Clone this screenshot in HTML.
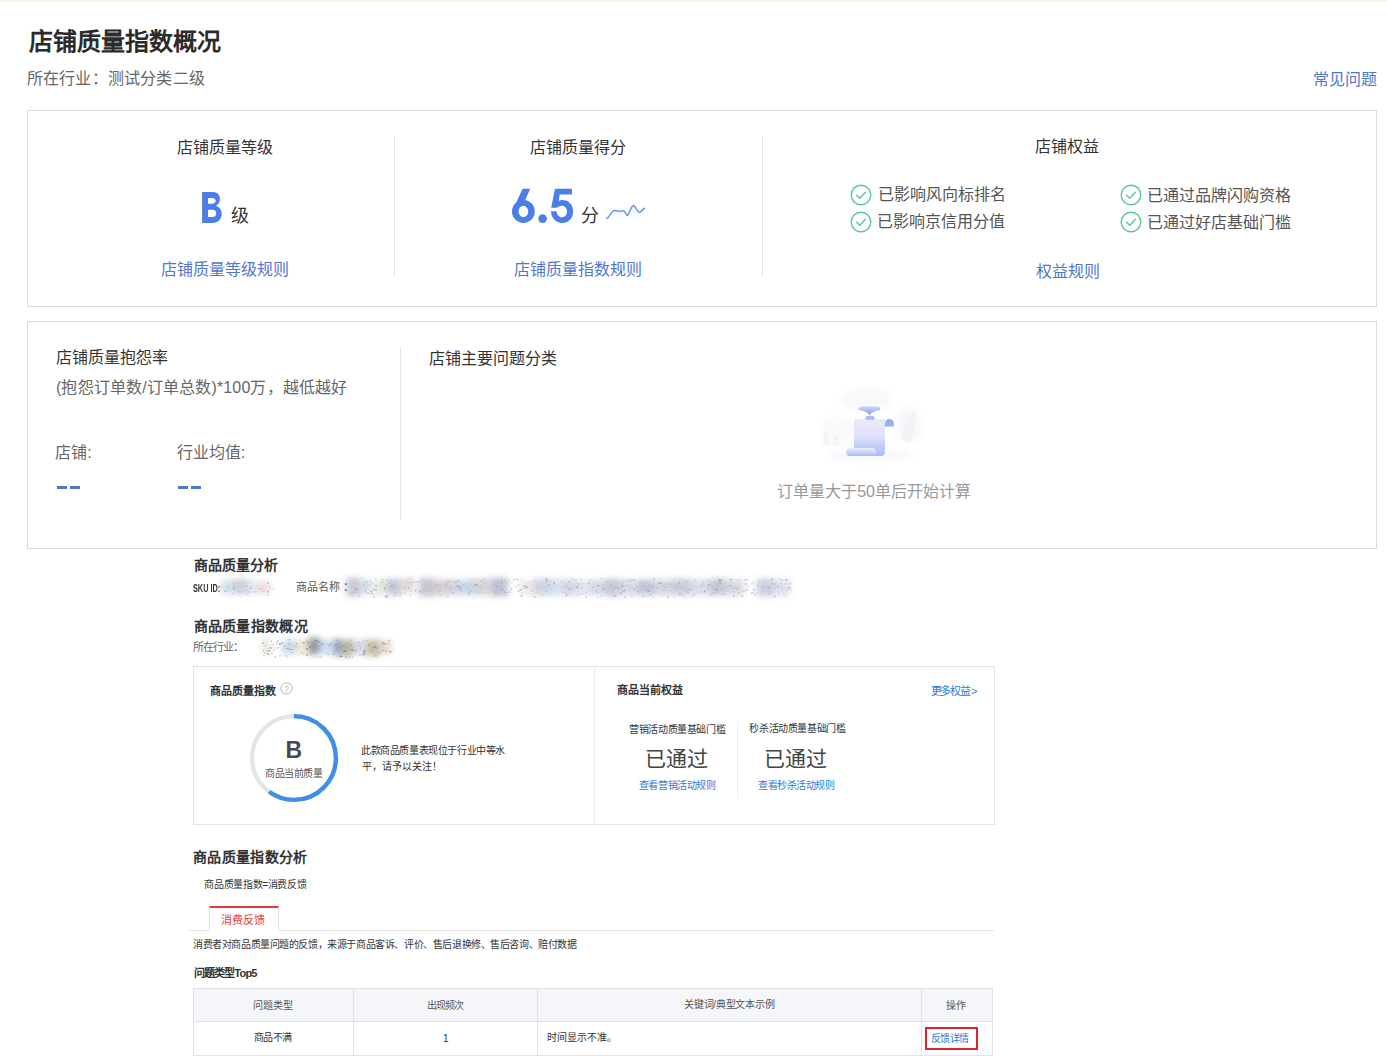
<!DOCTYPE html>
<html lang="zh-CN"><head><meta charset="utf-8">
<style>
html,body{margin:0;padding:0;background:#fff;}
body{width:1387px;height:1063px;position:relative;overflow:hidden;font-family:"Liberation Sans",sans-serif;}
.t{position:absolute;white-space:nowrap;}
.a{position:absolute;}
.topbar{position:absolute;left:0;top:0;width:1387px;height:2px;background:#fdf4e8;}
.box{position:absolute;border:1px solid #dcdcdc;box-sizing:border-box;}
.vl{position:absolute;width:1px;background:#e3e3e3;}
.blur{position:absolute;filter:blur(3px);}
</style></head><body>
<div class="topbar"></div>
<div class="box" style="left:27px;top:110px;width:1350px;height:197px;"></div>
<div class="vl" style="left:394px;top:137px;height:140px;"></div>
<div class="vl" style="left:762px;top:137px;height:140px;"></div>
<div class="box" style="left:27px;top:321px;width:1350px;height:228px;"></div>
<div class="vl" style="left:400px;top:347px;height:173px;background:#e6e6e6"></div>
<!-- dashes -->
<div class="a" style="left:57px;top:486px;width:10px;height:3px;background:#4f77cf"></div>
<div class="a" style="left:70px;top:486px;width:10px;height:3px;background:#4f77cf"></div>
<div class="a" style="left:178px;top:486px;width:10px;height:3px;background:#4f77cf"></div>
<div class="a" style="left:191px;top:486px;width:10px;height:3px;background:#4f77cf"></div>
<!-- check icons -->
<svg class="a" style="left:850px;top:184px" width="22" height="22" viewBox="0 0 22 22"><circle cx="11" cy="11" r="9.8" fill="none" stroke="#5cc6a2" stroke-width="1.4"/><path d="M6.6 11.2 L9.8 14.2 L15.4 8.2" fill="none" stroke="#5cc6a2" stroke-width="1.4" stroke-linecap="round" stroke-linejoin="round"/></svg>
<svg class="a" style="left:850px;top:211px" width="22" height="22" viewBox="0 0 22 22"><circle cx="11" cy="11" r="9.8" fill="none" stroke="#5cc6a2" stroke-width="1.4"/><path d="M6.6 11.2 L9.8 14.2 L15.4 8.2" fill="none" stroke="#5cc6a2" stroke-width="1.4" stroke-linecap="round" stroke-linejoin="round"/></svg>
<svg class="a" style="left:1120px;top:184px" width="22" height="22" viewBox="0 0 22 22"><circle cx="11" cy="11" r="9.8" fill="none" stroke="#5cc6a2" stroke-width="1.4"/><path d="M6.6 11.2 L9.8 14.2 L15.4 8.2" fill="none" stroke="#5cc6a2" stroke-width="1.4" stroke-linecap="round" stroke-linejoin="round"/></svg>
<svg class="a" style="left:1120px;top:211px" width="22" height="22" viewBox="0 0 22 22"><circle cx="11" cy="11" r="9.8" fill="none" stroke="#5cc6a2" stroke-width="1.4"/><path d="M6.6 11.2 L9.8 14.2 L15.4 8.2" fill="none" stroke="#5cc6a2" stroke-width="1.4" stroke-linecap="round" stroke-linejoin="round"/></svg>
<!-- sparkline -->
<svg class="a" style="left:604px;top:202px" width="44" height="22" viewBox="0 0 44 22">
<defs><linearGradient id="sg" x1="0" y1="0" x2="0" y2="1"><stop offset="0" stop-color="#dfe7fa" stop-opacity="1"/><stop offset="1" stop-color="#fff" stop-opacity="0"/></linearGradient></defs>
<path d="M2.8 16.4 C5.5 15.5 7.5 8.6 10.1 8.4 C12.5 8.2 14 9.5 16 9.2 C18 8.9 19.5 7.6 21 10 C22 12 22.8 14 23.6 13.2 C25 11.5 27.5 3.5 29.5 3.6 C31.5 3.7 33.5 10.5 35.3 10.4 C37 10.3 39 7 40.5 6.3 L40.5 21 L2.8 21 Z" fill="url(#sg)"/>
<path d="M2.8 16.4 C5.5 15.5 7.5 8.6 10.1 8.4 C12.5 8.2 14 9.5 16 9.2 C18 8.9 19.5 7.6 21 10 C22 12 22.8 14 23.6 13.2 C25 11.5 27.5 3.5 29.5 3.6 C31.5 3.7 33.5 10.5 35.3 10.4 C37 10.3 39 7 40.5 6.3" fill="none" stroke="#6f98e2" stroke-width="1.5" stroke-linecap="round"/>
</svg>

<!-- big B and 6.5 -->
<svg class="a" style="left:195px;top:185px" width="460" height="45" viewBox="195 185 460 45">
<path fill-rule="evenodd" fill="#4d7ee8" transform="translate(202.1 192)" d="M0 0 H10.2 C15 0 17.8 2.6 17.8 7 C17.8 10 16.4 12.4 14 13.8 C17.6 15 19.6 17.8 19.6 21.8 C19.6 27.4 16 31 10.4 31 H0 Z M5.9 5.9 H9.8 C12.2 5.9 13.5 7 13.5 8.85 C13.5 10.7 12.2 11.8 9.8 11.8 H5.9 Z M5.9 17.8 H10.4 C12.9 17.8 14.1 19.2 14.1 21.4 C14.1 23.6 12.9 25 10.4 25 H5.9 Z"/>
<path fill="#4d7ee8" d="M522.6 188.8 L530.2 188.8 L524.6 201.6 L513.4 208.4 Z"/><path fill="#4d7ee8" fill-rule="evenodd" d="M534.8 211.4 A11.4 11.5 0 1 1 512 211.4 A11.4 11.5 0 1 1 534.8 211.4 Z M528.2 211.5 A4.8 5.8 0 1 0 518.6 211.5 A4.8 5.8 0 1 0 528.2 211.5 Z"/>
<path fill="#4d7ee8" d="M555 188.8 L571.9 188.8 L571.9 194.6 L559.6 194.6 L558.8 201.2 C559.8 200.3 560.8 199.9 562.2 199.9 C568.6 199.9 573.1 204.6 573.1 211.4 C573.1 218.3 568.4 222.9 562 222.9 C556 222.9 551 218 551 211.3 L556.7 211.3 C556.7 214.8 559 217.3 561.9 217.3 C565 217.3 567 214.8 567 211.5 C567 208.2 565 205.7 561.9 205.7 C559.5 205.7 557.8 206.8 557.2 207.7 L551.2 207.7 Z"/>
<circle cx="542.6" cy="218.6" r="4.3" fill="#4d7ee8"/>
</svg>
<!-- empty illustration -->
<svg class="a" style="left:800px;top:375px" width="140" height="95" viewBox="800 375 140 95">
<defs>
<linearGradient id="pg" x1="0" y1="0" x2="0" y2="1"><stop offset="0" stop-color="#ecebfb"/><stop offset="0.45" stop-color="#dfe2fa"/><stop offset="1" stop-color="#a9bcf2"/></linearGradient>
<linearGradient id="rg" x1="0" y1="0" x2="0" y2="1"><stop offset="0" stop-color="#eceefb"/><stop offset="1" stop-color="#a8bcf2"/></linearGradient>
<linearGradient id="hg" x1="0" y1="0" x2="0" y2="1"><stop offset="0" stop-color="#c9d4f6"/><stop offset="1" stop-color="#8ea6ea"/></linearGradient>
<filter id="fb" x="-50%" y="-50%" width="200%" height="200%"><feGaussianBlur stdDeviation="3"/></filter>
<filter id="fb1" x="-20%" y="-20%" width="140%" height="140%"><feGaussianBlur stdDeviation="0.5"/></filter>
</defs>
<g filter="url(#fb)" opacity="0.5">
<ellipse cx="866" cy="400" rx="26" ry="12" fill="#f1f2f7"/>
<ellipse cx="838" cy="430" rx="18" ry="14" fill="#f3f4f8"/>
<ellipse cx="908" cy="425" rx="14" ry="18" fill="#f0f1f6"/>
<ellipse cx="870" cy="455" rx="44" ry="6" fill="#eef0f8"/>
</g>
<g opacity="0.35"><path d="M822 446 L824 432 L828 432 L830 446 Z M832 446 L834 436 L838 436 L839 446 Z" fill="#e8e9ef" filter="url(#fb1)"/>
<path d="M902 440 C904 425 908 415 915 410 C916 422 914 434 909 444 Z" fill="#e9eaf1" filter="url(#fb1)"/></g>
<g filter="url(#fb1)">
<path d="M854 419 L885 419 L885 452 Q885 456 881 456 L854 456 Z" fill="url(#pg)"/>
<rect x="846" y="448" width="30" height="8" rx="4" fill="url(#rg)"/>
<path d="M885 426.5 L885 423.3 A4.4 4.4 0 0 1 893.8 423.3 L893.8 426.5 Z" fill="#98b0f0"/>
<path d="M858.5 409.5 Q858 406.5 862 406.5 L877 406.5 Q881 406.5 880 410 L878 410.5 Q873 411 869.5 415 Q866 411 861 410.5 Z" fill="url(#hg)"/>
<path d="M865.3 419.8 L865.3 418 Q865.3 415.8 869.9 415.8 Q874.6 415.8 874.6 418 L874.6 419.8 Z" fill="#a9bdf2"/>
</g>
</svg>

<!-- bottom composite -->
<svg class="a" style="left:180px;top:560px" width="640" height="110" viewBox="180 560 640 110">
<defs><filter id="bl" x="-20%" y="-50%" width="140%" height="200%"><feGaussianBlur stdDeviation="3"/></filter></defs>
<g filter="url(#bl)" opacity="0.75">
<rect x="221" y="580" width="12" height="14" fill="#c5d6ea"/>
<rect x="233" y="579" width="14" height="15" fill="#bcbfcc"/>
<rect x="247" y="580" width="12" height="14" fill="#d4e4f0"/>
<rect x="258" y="581" width="12" height="13" fill="#ecd2d6"/>
<rect x="346" y="578" width="14" height="18" fill="#b9b6c2"/>
<rect x="360" y="579" width="12" height="16" fill="#c6dbe6"/>
<rect x="375" y="580" width="12" height="15" fill="#d8e4cc"/>
<rect x="387" y="579" width="14" height="16" fill="#aab6cc"/>
<rect x="402" y="578" width="12" height="14" fill="#dcc8cc"/>
<rect x="419" y="578" width="16" height="18" fill="#b4b4c4"/>
<rect x="435" y="580" width="18" height="15" fill="#c8bcc8"/>
<rect x="453" y="580" width="20" height="15" fill="#b4c8dc"/>
<rect x="473" y="579" width="16" height="16" fill="#c4c4cc"/>
<rect x="490" y="578" width="18" height="18" fill="#a8b0c4"/>
<rect x="520" y="581" width="14" height="13" fill="#e4dce0"/>
<rect x="534" y="579" width="16" height="16" fill="#bcc4d8"/>
<rect x="550" y="579" width="14" height="16" fill="#c8d8ec"/>
<rect x="564" y="580" width="12" height="15" fill="#c0c8d4"/>
<rect x="576" y="580" width="14" height="15" fill="#d8dcec"/>
<rect x="590" y="580" width="14" height="15" fill="#c4d0e4"/>
<rect x="604" y="579" width="16" height="17" fill="#b4b8c8"/>
<rect x="620" y="580" width="18" height="15" fill="#c4ccdc"/>
<rect x="638" y="580" width="16" height="15" fill="#a8b4cc"/>
<rect x="654" y="580" width="18" height="15" fill="#c4c8d4"/>
<rect x="672" y="579" width="18" height="16" fill="#b4bccc"/>
<rect x="690" y="580" width="20" height="15" fill="#ccd0dc"/>
<rect x="710" y="579" width="16" height="16" fill="#aeb6ca"/>
<rect x="726" y="580" width="18" height="15" fill="#c8ccd8"/>
<rect x="757" y="579" width="18" height="17" fill="#b8c0d4"/>
<rect x="776" y="580" width="14" height="15" fill="#d0d4e0"/>
<rect x="262" y="639" width="8" height="16" fill="#dcdcd8"/>
<rect x="282" y="640" width="14" height="14" fill="#b4cce6"/>
<rect x="296" y="640" width="12" height="14" fill="#e6e2c4"/>
<rect x="308" y="638" width="12" height="16" fill="#6e7278"/>
<rect x="320" y="640" width="12" height="14" fill="#b8d2ec"/>
<rect x="333" y="639" width="8" height="16" fill="#7080ac"/>
<rect x="341" y="640" width="12" height="16" fill="#98a07c"/>
<rect x="353" y="640" width="12" height="14" fill="#c8cce0"/>
<rect x="366" y="640" width="14" height="16" fill="#b0a080"/>
<rect x="380" y="640" width="12" height="14" fill="#e8d4c8"/>
</g>
<g><rect x="238" y="582" width="1" height="1" fill="#9aa4bc" opacity="0.26"/><rect x="224" y="587" width="1" height="1" fill="#a8b8d0" opacity="0.28"/><rect x="234" y="588" width="1" height="2" fill="#9aa4bc" opacity="0.43"/><rect x="254" y="588" width="1" height="2" fill="#a8b8d0" opacity="0.16"/><rect x="232" y="588" width="2" height="2" fill="#a8b8d0" opacity="0.19"/><rect x="227" y="584" width="2" height="1" fill="#b8c8dc" opacity="0.26"/><rect x="249" y="581" width="1" height="2" fill="#b8c8dc" opacity="0.30"/><rect x="249" y="591" width="3" height="2" fill="#a8b8d0" opacity="0.26"/><rect x="234" y="583" width="2" height="1" fill="#d8b8c0" opacity="0.31"/><rect x="267" y="590" width="2" height="2" fill="#9aa4bc" opacity="0.19"/><rect x="243" y="591" width="2" height="2" fill="#a8b8d0" opacity="0.16"/><rect x="256" y="591" width="2" height="2" fill="#d8b8c0" opacity="0.33"/><rect x="251" y="586" width="1" height="2" fill="#a8b8d0" opacity="0.36"/><rect x="224" y="590" width="2" height="2" fill="#a8b8d0" opacity="0.24"/><rect x="241" y="589" width="1" height="2" fill="#d8b8c0" opacity="0.20"/><rect x="227" y="581" width="2" height="1" fill="#b8c8dc" opacity="0.27"/><rect x="269" y="587" width="2" height="2" fill="#a8b8d0" opacity="0.31"/><rect x="267" y="591" width="2" height="2" fill="#a8b8d0" opacity="0.45"/><rect x="257" y="585" width="2" height="1" fill="#9aa4bc" opacity="0.20"/><rect x="233" y="583" width="3" height="2" fill="#b8c8dc" opacity="0.23"/><rect x="221" y="586" width="2" height="2" fill="#d8b8c0" opacity="0.44"/><rect x="257" y="587" width="1" height="2" fill="#a8b8d0" opacity="0.27"/><rect x="241" y="587" width="3" height="1" fill="#b8c8dc" opacity="0.17"/><rect x="232" y="582" width="2" height="2" fill="#9aa4bc" opacity="0.18"/><rect x="250" y="588" width="2" height="2" fill="#9aa4bc" opacity="0.17"/><rect x="232" y="585" width="2" height="2" fill="#d8b8c0" opacity="0.29"/><rect x="227" y="587" width="3" height="2" fill="#a8b8d0" opacity="0.24"/><rect x="228" y="590" width="2" height="2" fill="#b8c8dc" opacity="0.30"/><rect x="232" y="593" width="2" height="1" fill="#9aa4bc" opacity="0.38"/><rect x="237" y="589" width="1" height="2" fill="#d8b8c0" opacity="0.31"/><rect x="268" y="585" width="2" height="2" fill="#d8b8c0" opacity="0.34"/><rect x="253" y="591" width="2" height="1" fill="#a8b8d0" opacity="0.37"/><rect x="233" y="587" width="2" height="2" fill="#9aa4bc" opacity="0.45"/><rect x="262" y="587" width="2" height="2" fill="#d8b8c0" opacity="0.28"/><rect x="270" y="594" width="2" height="1" fill="#b8c8dc" opacity="0.18"/><rect x="245" y="585" width="3" height="2" fill="#9aa4bc" opacity="0.29"/><rect x="255" y="591" width="1" height="2" fill="#9aa4bc" opacity="0.42"/><rect x="262" y="591" width="3" height="1" fill="#a8b8d0" opacity="0.39"/><rect x="238" y="591" width="3" height="2" fill="#a8b8d0" opacity="0.37"/><rect x="225" y="582" width="2" height="1" fill="#b8c8dc" opacity="0.33"/><rect x="245" y="589" width="3" height="2" fill="#d8b8c0" opacity="0.20"/><rect x="250" y="580" width="1" height="2" fill="#b8c8dc" opacity="0.28"/><rect x="266" y="592" width="2" height="1" fill="#d8b8c0" opacity="0.21"/><rect x="247" y="591" width="2" height="2" fill="#a8b8d0" opacity="0.40"/><rect x="224" y="590" width="3" height="2" fill="#a8b8d0" opacity="0.40"/><rect x="267" y="582" width="2" height="2" fill="#9aa4bc" opacity="0.41"/><rect x="261" y="589" width="2" height="1" fill="#b8c8dc" opacity="0.29"/><rect x="259" y="588" width="2" height="2" fill="#a8b8d0" opacity="0.39"/><rect x="227" y="588" width="2" height="1" fill="#d8b8c0" opacity="0.16"/><rect x="226" y="586" width="1" height="1" fill="#a8b8d0" opacity="0.25"/><rect x="272" y="588" width="2" height="2" fill="#d8b8c0" opacity="0.29"/><rect x="249" y="587" width="2" height="2" fill="#d8b8c0" opacity="0.43"/><rect x="267" y="583" width="3" height="1" fill="#a8b8d0" opacity="0.19"/><rect x="244" y="581" width="2" height="2" fill="#9aa4bc" opacity="0.21"/><rect x="237" y="582" width="2" height="2" fill="#d8b8c0" opacity="0.19"/><rect x="267" y="594" width="2" height="2" fill="#9aa4bc" opacity="0.27"/><rect x="246" y="594" width="2" height="1" fill="#a8b8d0" opacity="0.45"/><rect x="526" y="586" width="2" height="2" fill="#8c8ca0" opacity="0.37"/><rect x="355" y="588" width="3" height="2" fill="#8c8ca0" opacity="0.27"/><rect x="576" y="583" width="1" height="1" fill="#a0a8c0" opacity="0.44"/><rect x="393" y="583" width="1" height="1" fill="#b8c0d4" opacity="0.38"/><rect x="711" y="593" width="2" height="2" fill="#a0a8c0" opacity="0.31"/><rect x="575" y="587" width="2" height="1" fill="#b8c0d4" opacity="0.17"/><rect x="652" y="586" width="1" height="2" fill="#8c8ca0" opacity="0.34"/><rect x="703" y="580" width="2" height="1" fill="#b8c0d4" opacity="0.41"/><rect x="548" y="584" width="3" height="2" fill="#98a8c8" opacity="0.19"/><rect x="580" y="582" width="1" height="1" fill="#b8c0d4" opacity="0.17"/><rect x="436" y="584" width="2" height="2" fill="#a0a8c0" opacity="0.24"/><rect x="569" y="581" width="2" height="1" fill="#b8c0d4" opacity="0.16"/><rect x="354" y="587" width="2" height="2" fill="#c8b0b8" opacity="0.22"/><rect x="545" y="590" width="3" height="2" fill="#c8b0b8" opacity="0.31"/><rect x="741" y="595" width="2" height="2" fill="#a0a8c0" opacity="0.44"/><rect x="499" y="593" width="2" height="2" fill="#b8c0d4" opacity="0.44"/><rect x="718" y="578" width="2" height="2" fill="#a0a8c0" opacity="0.17"/><rect x="642" y="585" width="2" height="2" fill="#a0a8c0" opacity="0.36"/><rect x="366" y="581" width="2" height="2" fill="#8c8ca0" opacity="0.23"/><rect x="774" y="596" width="2" height="1" fill="#8c8ca0" opacity="0.44"/><rect x="484" y="584" width="1" height="2" fill="#c8b0b8" opacity="0.18"/><rect x="470" y="590" width="2" height="2" fill="#8c8ca0" opacity="0.18"/><rect x="710" y="581" width="1" height="2" fill="#8c8ca0" opacity="0.24"/><rect x="626" y="580" width="2" height="2" fill="#b0b8a8" opacity="0.39"/><rect x="611" y="592" width="3" height="1" fill="#b8c0d4" opacity="0.37"/><rect x="632" y="579" width="3" height="2" fill="#b0b8a8" opacity="0.39"/><rect x="408" y="587" width="1" height="2" fill="#98a8c8" opacity="0.39"/><rect x="662" y="595" width="2" height="1" fill="#8c8ca0" opacity="0.16"/><rect x="630" y="595" width="3" height="2" fill="#98a8c8" opacity="0.17"/><rect x="354" y="588" width="2" height="2" fill="#b8c0d4" opacity="0.15"/><rect x="701" y="591" width="1" height="2" fill="#98a8c8" opacity="0.17"/><rect x="674" y="583" width="1" height="2" fill="#a0a8c0" opacity="0.37"/><rect x="437" y="591" width="3" height="2" fill="#c8b0b8" opacity="0.17"/><rect x="751" y="583" width="1" height="2" fill="#b0b8a8" opacity="0.34"/><rect x="380" y="581" width="2" height="2" fill="#b0b8a8" opacity="0.36"/><rect x="622" y="580" width="3" height="1" fill="#c8b0b8" opacity="0.23"/><rect x="645" y="590" width="3" height="2" fill="#b0b8a8" opacity="0.30"/><rect x="553" y="586" width="1" height="2" fill="#a0a8c0" opacity="0.24"/><rect x="384" y="587" width="2" height="2" fill="#8c8ca0" opacity="0.40"/><rect x="777" y="586" width="2" height="2" fill="#a0a8c0" opacity="0.42"/><rect x="760" y="579" width="1" height="1" fill="#b0b8a8" opacity="0.31"/><rect x="770" y="580" width="2" height="1" fill="#b0b8a8" opacity="0.26"/><rect x="568" y="594" width="3" height="1" fill="#a0a8c0" opacity="0.15"/><rect x="565" y="586" width="2" height="2" fill="#a0a8c0" opacity="0.27"/><rect x="513" y="580" width="2" height="1" fill="#b8c0d4" opacity="0.38"/><rect x="719" y="580" width="2" height="2" fill="#8c8ca0" opacity="0.42"/><rect x="475" y="585" width="3" height="2" fill="#98a8c8" opacity="0.17"/><rect x="758" y="592" width="1" height="2" fill="#8c8ca0" opacity="0.17"/><rect x="641" y="589" width="2" height="1" fill="#b8c0d4" opacity="0.28"/><rect x="486" y="592" width="3" height="1" fill="#b0b8a8" opacity="0.27"/><rect x="736" y="588" width="2" height="2" fill="#8c8ca0" opacity="0.16"/><rect x="672" y="586" width="2" height="2" fill="#b8c0d4" opacity="0.30"/><rect x="752" y="588" width="2" height="2" fill="#c8b0b8" opacity="0.25"/><rect x="479" y="591" width="2" height="2" fill="#b0b8a8" opacity="0.22"/><rect x="561" y="590" width="1" height="1" fill="#b0b8a8" opacity="0.20"/><rect x="439" y="594" width="3" height="2" fill="#a0a8c0" opacity="0.29"/><rect x="494" y="592" width="3" height="1" fill="#98a8c8" opacity="0.21"/><rect x="386" y="584" width="1" height="2" fill="#a0a8c0" opacity="0.26"/><rect x="706" y="582" width="1" height="2" fill="#c8b0b8" opacity="0.26"/><rect x="678" y="582" width="2" height="2" fill="#8c8ca0" opacity="0.30"/><rect x="602" y="584" width="2" height="1" fill="#b8c0d4" opacity="0.42"/><rect x="517" y="590" width="3" height="2" fill="#8c8ca0" opacity="0.19"/><rect x="535" y="592" width="3" height="2" fill="#c8b0b8" opacity="0.15"/><rect x="520" y="595" width="3" height="2" fill="#a0a8c0" opacity="0.38"/><rect x="446" y="581" width="1" height="2" fill="#b0b8a8" opacity="0.34"/><rect x="686" y="586" width="1" height="1" fill="#a0a8c0" opacity="0.22"/><rect x="755" y="590" width="2" height="1" fill="#b0b8a8" opacity="0.23"/><rect x="629" y="591" width="1" height="1" fill="#8c8ca0" opacity="0.24"/><rect x="766" y="581" width="2" height="1" fill="#98a8c8" opacity="0.15"/><rect x="585" y="596" width="2" height="2" fill="#b0b8a8" opacity="0.40"/><rect x="454" y="587" width="2" height="1" fill="#c8b0b8" opacity="0.36"/><rect x="483" y="578" width="3" height="2" fill="#b0b8a8" opacity="0.28"/><rect x="460" y="590" width="2" height="1" fill="#c8b0b8" opacity="0.16"/><rect x="496" y="586" width="3" height="1" fill="#8c8ca0" opacity="0.39"/><rect x="675" y="587" width="2" height="2" fill="#a0a8c0" opacity="0.24"/><rect x="711" y="582" width="2" height="2" fill="#b8c0d4" opacity="0.18"/><rect x="624" y="589" width="2" height="2" fill="#c8b0b8" opacity="0.42"/><rect x="371" y="589" width="3" height="1" fill="#a0a8c0" opacity="0.16"/><rect x="611" y="585" width="1" height="1" fill="#c8b0b8" opacity="0.28"/><rect x="663" y="584" width="1" height="1" fill="#a0a8c0" opacity="0.25"/><rect x="429" y="595" width="3" height="1" fill="#b8c0d4" opacity="0.35"/><rect x="514" y="585" width="2" height="2" fill="#a0a8c0" opacity="0.18"/><rect x="381" y="579" width="3" height="1" fill="#98a8c8" opacity="0.44"/><rect x="438" y="584" width="2" height="2" fill="#8c8ca0" opacity="0.16"/><rect x="557" y="585" width="3" height="1" fill="#b8c0d4" opacity="0.26"/><rect x="745" y="579" width="3" height="1" fill="#b0b8a8" opacity="0.38"/><rect x="364" y="579" width="1" height="1" fill="#b8c0d4" opacity="0.21"/><rect x="374" y="589" width="2" height="2" fill="#b8c0d4" opacity="0.44"/><rect x="621" y="583" width="2" height="2" fill="#b8c0d4" opacity="0.15"/><rect x="682" y="594" width="1" height="1" fill="#a0a8c0" opacity="0.18"/><rect x="664" y="586" width="3" height="2" fill="#c8b0b8" opacity="0.39"/><rect x="405" y="587" width="1" height="2" fill="#b8c0d4" opacity="0.40"/><rect x="690" y="589" width="2" height="2" fill="#c8b0b8" opacity="0.26"/><rect x="694" y="579" width="2" height="2" fill="#a0a8c0" opacity="0.22"/><rect x="375" y="579" width="2" height="1" fill="#c8b0b8" opacity="0.42"/><rect x="786" y="583" width="1" height="1" fill="#8c8ca0" opacity="0.28"/><rect x="786" y="595" width="2" height="1" fill="#a0a8c0" opacity="0.28"/><rect x="622" y="590" width="1" height="2" fill="#b8c0d4" opacity="0.23"/><rect x="465" y="583" width="2" height="1" fill="#c8b0b8" opacity="0.22"/><rect x="455" y="581" width="2" height="2" fill="#8c8ca0" opacity="0.27"/><rect x="788" y="587" width="2" height="2" fill="#8c8ca0" opacity="0.35"/><rect x="787" y="580" width="3" height="1" fill="#c8b0b8" opacity="0.42"/><rect x="364" y="583" width="1" height="1" fill="#a0a8c0" opacity="0.33"/><rect x="714" y="581" width="1" height="2" fill="#98a8c8" opacity="0.41"/><rect x="546" y="583" width="1" height="1" fill="#b0b8a8" opacity="0.33"/><rect x="622" y="582" width="2" height="2" fill="#a0a8c0" opacity="0.16"/><rect x="791" y="579" width="2" height="1" fill="#b8c0d4" opacity="0.27"/><rect x="511" y="589" width="1" height="1" fill="#8c8ca0" opacity="0.39"/><rect x="590" y="579" width="1" height="2" fill="#b0b8a8" opacity="0.32"/><rect x="630" y="580" width="2" height="2" fill="#b0b8a8" opacity="0.23"/><rect x="786" y="590" width="3" height="1" fill="#b8c0d4" opacity="0.37"/><rect x="739" y="585" width="1" height="2" fill="#b0b8a8" opacity="0.21"/><rect x="670" y="582" width="1" height="2" fill="#a0a8c0" opacity="0.28"/><rect x="711" y="585" width="2" height="2" fill="#a0a8c0" opacity="0.19"/><rect x="369" y="581" width="3" height="1" fill="#98a8c8" opacity="0.34"/><rect x="511" y="587" width="2" height="2" fill="#b8c0d4" opacity="0.20"/><rect x="422" y="579" width="3" height="2" fill="#a0a8c0" opacity="0.24"/><rect x="719" y="579" width="3" height="2" fill="#8c8ca0" opacity="0.33"/><rect x="629" y="580" width="2" height="2" fill="#a0a8c0" opacity="0.34"/><rect x="620" y="582" width="3" height="1" fill="#98a8c8" opacity="0.22"/><rect x="524" y="587" width="3" height="2" fill="#8c8ca0" opacity="0.19"/><rect x="778" y="593" width="2" height="1" fill="#98a8c8" opacity="0.40"/><rect x="645" y="590" width="2" height="1" fill="#c8b0b8" opacity="0.33"/><rect x="591" y="589" width="2" height="2" fill="#c8b0b8" opacity="0.24"/><rect x="457" y="585" width="2" height="2" fill="#98a8c8" opacity="0.28"/><rect x="356" y="589" width="3" height="2" fill="#a0a8c0" opacity="0.28"/><rect x="621" y="593" width="2" height="2" fill="#c8b0b8" opacity="0.18"/><rect x="403" y="586" width="1" height="2" fill="#98a8c8" opacity="0.30"/><rect x="364" y="589" width="1" height="2" fill="#b8c0d4" opacity="0.38"/><rect x="574" y="579" width="3" height="2" fill="#a0a8c0" opacity="0.16"/><rect x="376" y="589" width="1" height="1" fill="#a0a8c0" opacity="0.44"/><rect x="565" y="595" width="2" height="2" fill="#b0b8a8" opacity="0.43"/><rect x="375" y="584" width="2" height="1" fill="#b8c0d4" opacity="0.42"/><rect x="468" y="593" width="2" height="2" fill="#98a8c8" opacity="0.44"/><rect x="560" y="589" width="2" height="2" fill="#b8c0d4" opacity="0.16"/><rect x="427" y="581" width="2" height="2" fill="#b8c0d4" opacity="0.42"/><rect x="421" y="592" width="1" height="2" fill="#8c8ca0" opacity="0.34"/><rect x="506" y="594" width="1" height="2" fill="#98a8c8" opacity="0.34"/><rect x="521" y="592" width="2" height="2" fill="#b8c0d4" opacity="0.32"/><rect x="506" y="592" width="3" height="1" fill="#a0a8c0" opacity="0.33"/><rect x="772" y="583" width="2" height="2" fill="#b0b8a8" opacity="0.44"/><rect x="733" y="595" width="2" height="2" fill="#8c8ca0" opacity="0.37"/><rect x="445" y="583" width="3" height="2" fill="#98a8c8" opacity="0.26"/><rect x="367" y="587" width="1" height="1" fill="#8c8ca0" opacity="0.15"/><rect x="504" y="580" width="2" height="2" fill="#a0a8c0" opacity="0.27"/><rect x="480" y="580" width="2" height="2" fill="#c8b0b8" opacity="0.20"/><rect x="352" y="592" width="2" height="2" fill="#8c8ca0" opacity="0.17"/><rect x="410" y="590" width="2" height="2" fill="#b8c0d4" opacity="0.44"/><rect x="371" y="593" width="2" height="2" fill="#b0b8a8" opacity="0.32"/><rect x="614" y="587" width="3" height="1" fill="#a0a8c0" opacity="0.42"/><rect x="366" y="588" width="3" height="1" fill="#a0a8c0" opacity="0.20"/><rect x="752" y="580" width="2" height="1" fill="#c8b0b8" opacity="0.21"/><rect x="617" y="587" width="3" height="2" fill="#a0a8c0" opacity="0.30"/><rect x="374" y="589" width="3" height="2" fill="#98a8c8" opacity="0.15"/><rect x="722" y="591" width="3" height="1" fill="#b0b8a8" opacity="0.35"/><rect x="424" y="596" width="2" height="1" fill="#b0b8a8" opacity="0.16"/><rect x="495" y="591" width="2" height="2" fill="#8c8ca0" opacity="0.23"/><rect x="592" y="586" width="2" height="2" fill="#b0b8a8" opacity="0.43"/><rect x="744" y="580" width="1" height="1" fill="#b8c0d4" opacity="0.42"/><rect x="721" y="582" width="2" height="2" fill="#b8c0d4" opacity="0.21"/><rect x="519" y="589" width="3" height="2" fill="#b0b8a8" opacity="0.44"/><rect x="720" y="588" width="3" height="2" fill="#b0b8a8" opacity="0.15"/><rect x="358" y="595" width="2" height="2" fill="#b8c0d4" opacity="0.39"/><rect x="520" y="589" width="2" height="1" fill="#8c8ca0" opacity="0.16"/><rect x="393" y="595" width="2" height="1" fill="#b0b8a8" opacity="0.16"/><rect x="365" y="590" width="1" height="2" fill="#8c8ca0" opacity="0.37"/><rect x="375" y="589" width="2" height="1" fill="#98a8c8" opacity="0.42"/><rect x="375" y="594" width="3" height="1" fill="#a0a8c0" opacity="0.21"/><rect x="396" y="579" width="1" height="2" fill="#b0b8a8" opacity="0.24"/><rect x="390" y="580" width="2" height="2" fill="#b8c0d4" opacity="0.25"/><rect x="462" y="584" width="2" height="1" fill="#b0b8a8" opacity="0.38"/><rect x="751" y="592" width="3" height="2" fill="#98a8c8" opacity="0.37"/><rect x="697" y="579" width="1" height="2" fill="#c8b0b8" opacity="0.36"/><rect x="585" y="582" width="1" height="2" fill="#b8c0d4" opacity="0.20"/><rect x="347" y="582" width="1" height="1" fill="#b8c0d4" opacity="0.30"/><rect x="565" y="592" width="2" height="2" fill="#98a8c8" opacity="0.25"/><rect x="716" y="583" width="2" height="2" fill="#a0a8c0" opacity="0.43"/><rect x="449" y="581" width="1" height="2" fill="#b0b8a8" opacity="0.32"/><rect x="393" y="584" width="1" height="2" fill="#c8b0b8" opacity="0.42"/><rect x="678" y="586" width="1" height="2" fill="#a0a8c0" opacity="0.24"/><rect x="536" y="588" width="2" height="2" fill="#b0b8a8" opacity="0.22"/><rect x="551" y="588" width="1" height="2" fill="#98a8c8" opacity="0.25"/><rect x="415" y="593" width="2" height="1" fill="#c8b0b8" opacity="0.28"/><rect x="690" y="588" width="2" height="2" fill="#c8b0b8" opacity="0.34"/><rect x="656" y="587" width="2" height="2" fill="#b0b8a8" opacity="0.40"/><rect x="621" y="591" width="2" height="2" fill="#b8c0d4" opacity="0.33"/><rect x="501" y="582" width="2" height="2" fill="#b0b8a8" opacity="0.45"/><rect x="419" y="590" width="2" height="2" fill="#a0a8c0" opacity="0.45"/><rect x="700" y="591" width="3" height="2" fill="#a0a8c0" opacity="0.18"/><rect x="752" y="583" width="3" height="2" fill="#8c8ca0" opacity="0.15"/><rect x="726" y="586" width="2" height="2" fill="#b0b8a8" opacity="0.24"/><rect x="356" y="583" width="3" height="1" fill="#b0b8a8" opacity="0.22"/><rect x="726" y="591" width="3" height="1" fill="#b0b8a8" opacity="0.37"/><rect x="738" y="592" width="2" height="2" fill="#a0a8c0" opacity="0.34"/><rect x="548" y="584" width="1" height="2" fill="#a0a8c0" opacity="0.38"/><rect x="663" y="589" width="2" height="2" fill="#c8b0b8" opacity="0.29"/><rect x="623" y="585" width="2" height="2" fill="#b8c0d4" opacity="0.38"/><rect x="519" y="587" width="1" height="1" fill="#b8c0d4" opacity="0.31"/><rect x="418" y="592" width="2" height="2" fill="#b8c0d4" opacity="0.18"/><rect x="602" y="588" width="3" height="2" fill="#8c8ca0" opacity="0.34"/><rect x="715" y="587" width="3" height="2" fill="#c8b0b8" opacity="0.21"/><rect x="651" y="585" width="1" height="2" fill="#98a8c8" opacity="0.26"/><rect x="371" y="583" width="3" height="1" fill="#8c8ca0" opacity="0.17"/><rect x="753" y="589" width="2" height="2" fill="#b8c0d4" opacity="0.18"/><rect x="481" y="585" width="2" height="2" fill="#c8b0b8" opacity="0.21"/><rect x="404" y="592" width="2" height="2" fill="#b0b8a8" opacity="0.32"/><rect x="447" y="595" width="2" height="2" fill="#b0b8a8" opacity="0.40"/><rect x="700" y="585" width="2" height="2" fill="#b0b8a8" opacity="0.19"/><rect x="717" y="584" width="2" height="2" fill="#b0b8a8" opacity="0.26"/><rect x="459" y="586" width="2" height="2" fill="#8c8ca0" opacity="0.39"/><rect x="702" y="584" width="2" height="2" fill="#c8b0b8" opacity="0.30"/><rect x="623" y="580" width="2" height="1" fill="#b8c0d4" opacity="0.41"/><rect x="371" y="593" width="2" height="1" fill="#98a8c8" opacity="0.40"/><rect x="628" y="578" width="1" height="1" fill="#8c8ca0" opacity="0.35"/><rect x="457" y="580" width="2" height="1" fill="#a0a8c0" opacity="0.38"/><rect x="500" y="581" width="3" height="2" fill="#a0a8c0" opacity="0.33"/><rect x="652" y="596" width="1" height="2" fill="#98a8c8" opacity="0.39"/><rect x="719" y="582" width="2" height="2" fill="#8c8ca0" opacity="0.37"/><rect x="541" y="594" width="1" height="2" fill="#c8b0b8" opacity="0.22"/><rect x="408" y="587" width="1" height="2" fill="#c8b0b8" opacity="0.42"/><rect x="658" y="582" width="2" height="2" fill="#98a8c8" opacity="0.41"/><rect x="349" y="593" width="3" height="2" fill="#98a8c8" opacity="0.30"/><rect x="478" y="586" width="3" height="2" fill="#b0b8a8" opacity="0.17"/><rect x="629" y="589" width="1" height="1" fill="#98a8c8" opacity="0.16"/><rect x="674" y="596" width="1" height="2" fill="#c8b0b8" opacity="0.30"/><rect x="745" y="579" width="3" height="2" fill="#a0a8c0" opacity="0.25"/><rect x="729" y="585" width="3" height="2" fill="#98a8c8" opacity="0.38"/><rect x="440" y="586" width="3" height="2" fill="#98a8c8" opacity="0.17"/><rect x="475" y="584" width="3" height="2" fill="#b8c0d4" opacity="0.30"/><rect x="467" y="587" width="2" height="2" fill="#c8b0b8" opacity="0.39"/><rect x="493" y="584" width="2" height="1" fill="#98a8c8" opacity="0.44"/><rect x="385" y="596" width="3" height="2" fill="#98a8c8" opacity="0.42"/><rect x="589" y="579" width="2" height="1" fill="#8c8ca0" opacity="0.16"/><rect x="712" y="587" width="1" height="2" fill="#98a8c8" opacity="0.33"/><rect x="620" y="589" width="1" height="1" fill="#8c8ca0" opacity="0.35"/><rect x="550" y="592" width="1" height="2" fill="#a0a8c0" opacity="0.41"/><rect x="534" y="580" width="1" height="2" fill="#a0a8c0" opacity="0.39"/><rect x="596" y="583" width="2" height="1" fill="#c8b0b8" opacity="0.16"/><rect x="355" y="588" width="1" height="2" fill="#98a8c8" opacity="0.31"/><rect x="713" y="592" width="3" height="2" fill="#b0b8a8" opacity="0.43"/><rect x="545" y="578" width="3" height="2" fill="#98a8c8" opacity="0.45"/><rect x="639" y="581" width="3" height="2" fill="#8c8ca0" opacity="0.17"/><rect x="556" y="594" width="1" height="2" fill="#8c8ca0" opacity="0.15"/><rect x="644" y="596" width="1" height="1" fill="#8c8ca0" opacity="0.19"/><rect x="354" y="591" width="2" height="2" fill="#b0b8a8" opacity="0.37"/><rect x="757" y="585" width="2" height="2" fill="#8c8ca0" opacity="0.24"/><rect x="594" y="587" width="2" height="1" fill="#b0b8a8" opacity="0.16"/><rect x="373" y="594" width="1" height="2" fill="#b8c0d4" opacity="0.24"/><rect x="613" y="595" width="3" height="2" fill="#8c8ca0" opacity="0.24"/><rect x="768" y="591" width="3" height="2" fill="#a0a8c0" opacity="0.19"/><rect x="701" y="585" width="2" height="2" fill="#c8b0b8" opacity="0.29"/><rect x="692" y="586" width="2" height="2" fill="#b8c0d4" opacity="0.24"/><rect x="373" y="596" width="2" height="2" fill="#b0b8a8" opacity="0.44"/><rect x="716" y="589" width="2" height="2" fill="#c8b0b8" opacity="0.44"/><rect x="456" y="585" width="3" height="2" fill="#a0a8c0" opacity="0.39"/><rect x="472" y="578" width="2" height="2" fill="#c8b0b8" opacity="0.20"/><rect x="756" y="592" width="1" height="2" fill="#a0a8c0" opacity="0.39"/><rect x="732" y="588" width="2" height="2" fill="#b0b8a8" opacity="0.38"/><rect x="568" y="588" width="3" height="2" fill="#a0a8c0" opacity="0.39"/><rect x="667" y="596" width="2" height="2" fill="#8c8ca0" opacity="0.35"/><rect x="553" y="582" width="2" height="2" fill="#8c8ca0" opacity="0.39"/><rect x="551" y="580" width="2" height="1" fill="#a0a8c0" opacity="0.27"/><rect x="578" y="583" width="2" height="2" fill="#98a8c8" opacity="0.33"/><rect x="430" y="581" width="2" height="2" fill="#b8c0d4" opacity="0.26"/><rect x="597" y="585" width="2" height="1" fill="#8c8ca0" opacity="0.43"/><rect x="566" y="594" width="2" height="2" fill="#c8b0b8" opacity="0.39"/><rect x="415" y="589" width="2" height="2" fill="#98a8c8" opacity="0.33"/><rect x="388" y="582" width="3" height="2" fill="#98a8c8" opacity="0.21"/><rect x="758" y="583" width="1" height="2" fill="#98a8c8" opacity="0.40"/><rect x="775" y="583" width="1" height="2" fill="#a0a8c0" opacity="0.45"/><rect x="514" y="578" width="1" height="2" fill="#b8c0d4" opacity="0.41"/><rect x="550" y="595" width="1" height="2" fill="#b0b8a8" opacity="0.27"/><rect x="399" y="595" width="2" height="2" fill="#98a8c8" opacity="0.22"/><rect x="386" y="595" width="3" height="1" fill="#c8b0b8" opacity="0.40"/><rect x="511" y="582" width="2" height="1" fill="#8c8ca0" opacity="0.43"/><rect x="765" y="579" width="1" height="1" fill="#b8c0d4" opacity="0.39"/><rect x="662" y="590" width="3" height="1" fill="#8c8ca0" opacity="0.19"/><rect x="682" y="595" width="2" height="2" fill="#98a8c8" opacity="0.28"/><rect x="636" y="586" width="2" height="2" fill="#c8b0b8" opacity="0.19"/><rect x="560" y="581" width="2" height="1" fill="#b0b8a8" opacity="0.42"/><rect x="554" y="594" width="1" height="1" fill="#a0a8c0" opacity="0.17"/><rect x="621" y="585" width="2" height="2" fill="#8c8ca0" opacity="0.43"/><rect x="517" y="578" width="1" height="2" fill="#b8c0d4" opacity="0.25"/><rect x="450" y="580" width="2" height="1" fill="#b8c0d4" opacity="0.22"/><rect x="371" y="591" width="2" height="2" fill="#a0a8c0" opacity="0.23"/><rect x="529" y="581" width="2" height="2" fill="#b8c0d4" opacity="0.25"/><rect x="421" y="587" width="2" height="2" fill="#c8b0b8" opacity="0.18"/><rect x="781" y="579" width="2" height="2" fill="#c8b0b8" opacity="0.40"/><rect x="399" y="592" width="2" height="2" fill="#b8c0d4" opacity="0.45"/><rect x="758" y="580" width="2" height="2" fill="#a0a8c0" opacity="0.17"/><rect x="669" y="583" width="1" height="2" fill="#98a8c8" opacity="0.25"/><rect x="408" y="578" width="2" height="1" fill="#b8c0d4" opacity="0.28"/><rect x="752" y="582" width="2" height="1" fill="#a0a8c0" opacity="0.31"/><rect x="449" y="581" width="1" height="1" fill="#98a8c8" opacity="0.37"/><rect x="685" y="581" width="2" height="2" fill="#b0b8a8" opacity="0.36"/><rect x="707" y="588" width="2" height="1" fill="#8c8ca0" opacity="0.36"/><rect x="577" y="593" width="1" height="2" fill="#b8c0d4" opacity="0.25"/><rect x="721" y="594" width="3" height="1" fill="#8c8ca0" opacity="0.27"/><rect x="686" y="580" width="2" height="1" fill="#a0a8c0" opacity="0.32"/><rect x="785" y="579" width="2" height="2" fill="#98a8c8" opacity="0.41"/><rect x="504" y="595" width="1" height="1" fill="#b8c0d4" opacity="0.36"/><rect x="709" y="594" width="2" height="2" fill="#c8b0b8" opacity="0.32"/><rect x="746" y="583" width="1" height="2" fill="#c8b0b8" opacity="0.28"/><rect x="357" y="592" width="2" height="1" fill="#a0a8c0" opacity="0.44"/><rect x="446" y="581" width="1" height="2" fill="#b8c0d4" opacity="0.32"/><rect x="771" y="578" width="2" height="2" fill="#8c8ca0" opacity="0.40"/><rect x="629" y="586" width="2" height="2" fill="#c8b0b8" opacity="0.18"/><rect x="733" y="591" width="1" height="2" fill="#8c8ca0" opacity="0.29"/><rect x="607" y="592" width="1" height="1" fill="#8c8ca0" opacity="0.27"/><rect x="407" y="589" width="2" height="1" fill="#b0b8a8" opacity="0.32"/><rect x="678" y="581" width="1" height="2" fill="#c8b0b8" opacity="0.36"/><rect x="612" y="589" width="1" height="2" fill="#8c8ca0" opacity="0.38"/><rect x="497" y="582" width="2" height="2" fill="#c8b0b8" opacity="0.40"/><rect x="597" y="596" width="2" height="2" fill="#98a8c8" opacity="0.17"/><rect x="576" y="595" width="2" height="1" fill="#c8b0b8" opacity="0.35"/><rect x="351" y="580" width="2" height="1" fill="#b8c0d4" opacity="0.28"/><rect x="571" y="578" width="2" height="2" fill="#c8b0b8" opacity="0.38"/><rect x="763" y="589" width="1" height="1" fill="#b0b8a8" opacity="0.34"/><rect x="754" y="589" width="1" height="2" fill="#8c8ca0" opacity="0.23"/><rect x="578" y="586" width="1" height="2" fill="#8c8ca0" opacity="0.24"/><rect x="634" y="580" width="2" height="1" fill="#c8b0b8" opacity="0.33"/><rect x="761" y="586" width="2" height="2" fill="#c8b0b8" opacity="0.32"/><rect x="468" y="591" width="2" height="2" fill="#98a8c8" opacity="0.36"/><rect x="445" y="585" width="2" height="2" fill="#98a8c8" opacity="0.24"/><rect x="559" y="593" width="1" height="1" fill="#b8c0d4" opacity="0.22"/><rect x="574" y="585" width="3" height="1" fill="#b8c0d4" opacity="0.20"/><rect x="770" y="584" width="2" height="2" fill="#b8c0d4" opacity="0.24"/><rect x="785" y="583" width="1" height="1" fill="#98a8c8" opacity="0.17"/><rect x="734" y="586" width="1" height="2" fill="#c8b0b8" opacity="0.40"/><rect x="504" y="592" width="2" height="2" fill="#b0b8a8" opacity="0.43"/><rect x="531" y="590" width="2" height="2" fill="#a0a8c0" opacity="0.33"/><rect x="724" y="593" width="1" height="2" fill="#b0b8a8" opacity="0.43"/><rect x="789" y="583" width="2" height="2" fill="#8c8ca0" opacity="0.15"/><rect x="687" y="589" width="3" height="2" fill="#98a8c8" opacity="0.19"/><rect x="724" y="583" width="1" height="2" fill="#c8b0b8" opacity="0.36"/><rect x="474" y="584" width="2" height="2" fill="#98a8c8" opacity="0.32"/><rect x="517" y="584" width="3" height="2" fill="#c8b0b8" opacity="0.24"/><rect x="585" y="592" width="3" height="2" fill="#c8b0b8" opacity="0.32"/><rect x="385" y="595" width="2" height="2" fill="#a0a8c0" opacity="0.44"/><rect x="437" y="586" width="1" height="1" fill="#8c8ca0" opacity="0.23"/><rect x="745" y="583" width="2" height="2" fill="#98a8c8" opacity="0.45"/><rect x="576" y="587" width="3" height="2" fill="#c8b0b8" opacity="0.26"/><rect x="611" y="584" width="1" height="2" fill="#8c8ca0" opacity="0.31"/><rect x="390" y="585" width="3" height="2" fill="#98a8c8" opacity="0.43"/><rect x="415" y="581" width="3" height="2" fill="#c8b0b8" opacity="0.28"/><rect x="624" y="596" width="2" height="2" fill="#98a8c8" opacity="0.37"/><rect x="387" y="585" width="2" height="1" fill="#b8c0d4" opacity="0.30"/><rect x="395" y="594" width="2" height="2" fill="#c8b0b8" opacity="0.34"/><rect x="579" y="593" width="2" height="2" fill="#a0a8c0" opacity="0.27"/><rect x="373" y="588" width="1" height="2" fill="#98a8c8" opacity="0.45"/><rect x="629" y="579" width="3" height="1" fill="#8c8ca0" opacity="0.24"/><rect x="653" y="578" width="2" height="2" fill="#8c8ca0" opacity="0.33"/><rect x="643" y="582" width="3" height="2" fill="#98a8c8" opacity="0.23"/><rect x="634" y="588" width="2" height="2" fill="#a0a8c0" opacity="0.27"/><rect x="400" y="581" width="1" height="1" fill="#8c8ca0" opacity="0.17"/><rect x="768" y="587" width="3" height="2" fill="#c8b0b8" opacity="0.39"/><rect x="374" y="578" width="2" height="1" fill="#b0b8a8" opacity="0.22"/><rect x="469" y="579" width="1" height="2" fill="#8c8ca0" opacity="0.25"/><rect x="546" y="585" width="1" height="1" fill="#c8b0b8" opacity="0.32"/><rect x="773" y="586" width="2" height="1" fill="#a0a8c0" opacity="0.16"/><rect x="760" y="593" width="2" height="1" fill="#c8b0b8" opacity="0.24"/><rect x="614" y="595" width="3" height="1" fill="#a0a8c0" opacity="0.35"/><rect x="646" y="589" width="3" height="2" fill="#c8b0b8" opacity="0.41"/><rect x="562" y="592" width="2" height="1" fill="#a0a8c0" opacity="0.20"/><rect x="515" y="578" width="2" height="2" fill="#98a8c8" opacity="0.26"/><rect x="495" y="594" width="2" height="2" fill="#b0b8a8" opacity="0.17"/><rect x="401" y="593" width="2" height="2" fill="#a0a8c0" opacity="0.27"/><rect x="554" y="584" width="3" height="1" fill="#b8c0d4" opacity="0.35"/><rect x="498" y="581" width="2" height="1" fill="#a0a8c0" opacity="0.23"/><rect x="718" y="580" width="3" height="2" fill="#a0a8c0" opacity="0.20"/><rect x="503" y="591" width="3" height="2" fill="#98a8c8" opacity="0.21"/><rect x="769" y="587" width="2" height="2" fill="#b0b8a8" opacity="0.19"/><rect x="660" y="583" width="3" height="2" fill="#b8c0d4" opacity="0.31"/><rect x="526" y="587" width="2" height="1" fill="#b0b8a8" opacity="0.30"/><rect x="587" y="583" width="3" height="1" fill="#b0b8a8" opacity="0.37"/><rect x="411" y="578" width="1" height="2" fill="#a0a8c0" opacity="0.38"/><rect x="449" y="581" width="1" height="1" fill="#98a8c8" opacity="0.42"/><rect x="704" y="592" width="2" height="1" fill="#b0b8a8" opacity="0.24"/><rect x="447" y="580" width="3" height="2" fill="#b8c0d4" opacity="0.27"/><rect x="750" y="592" width="2" height="2" fill="#a0a8c0" opacity="0.16"/><rect x="648" y="590" width="2" height="2" fill="#8c8ca0" opacity="0.35"/><rect x="657" y="582" width="3" height="2" fill="#b0b8a8" opacity="0.18"/><rect x="476" y="583" width="2" height="2" fill="#b0b8a8" opacity="0.16"/><rect x="364" y="581" width="2" height="2" fill="#a0a8c0" opacity="0.26"/><rect x="363" y="584" width="2" height="2" fill="#a0a8c0" opacity="0.32"/><rect x="665" y="583" width="3" height="2" fill="#b0b8a8" opacity="0.32"/><rect x="762" y="580" width="2" height="1" fill="#98a8c8" opacity="0.33"/><rect x="367" y="582" width="1" height="1" fill="#b8c0d4" opacity="0.21"/><rect x="753" y="591" width="1" height="2" fill="#b0b8a8" opacity="0.37"/><rect x="790" y="589" width="2" height="2" fill="#98a8c8" opacity="0.18"/><rect x="767" y="586" width="2" height="2" fill="#98a8c8" opacity="0.37"/><rect x="715" y="589" width="3" height="2" fill="#8c8ca0" opacity="0.35"/><rect x="438" y="590" width="2" height="2" fill="#a0a8c0" opacity="0.16"/><rect x="659" y="593" width="2" height="1" fill="#98a8c8" opacity="0.20"/><rect x="693" y="582" width="2" height="1" fill="#8c8ca0" opacity="0.20"/><rect x="501" y="580" width="2" height="1" fill="#a0a8c0" opacity="0.36"/><rect x="562" y="587" width="2" height="1" fill="#98a8c8" opacity="0.36"/><rect x="405" y="590" width="2" height="1" fill="#b0b8a8" opacity="0.19"/><rect x="597" y="584" width="1" height="2" fill="#c8b0b8" opacity="0.38"/><rect x="421" y="590" width="3" height="2" fill="#a0a8c0" opacity="0.18"/><rect x="475" y="584" width="2" height="1" fill="#8c8ca0" opacity="0.42"/><rect x="481" y="580" width="2" height="2" fill="#8c8ca0" opacity="0.20"/><rect x="544" y="588" width="2" height="1" fill="#98a8c8" opacity="0.17"/><rect x="351" y="596" width="3" height="1" fill="#b0b8a8" opacity="0.37"/><rect x="782" y="588" width="1" height="2" fill="#c8b0b8" opacity="0.44"/><rect x="563" y="592" width="2" height="1" fill="#b8c0d4" opacity="0.43"/><rect x="633" y="589" width="2" height="2" fill="#a0a8c0" opacity="0.17"/><rect x="679" y="578" width="3" height="1" fill="#b8c0d4" opacity="0.26"/><rect x="774" y="587" width="2" height="1" fill="#b0b8a8" opacity="0.40"/><rect x="676" y="584" width="2" height="2" fill="#b8c0d4" opacity="0.25"/><rect x="510" y="588" width="2" height="2" fill="#a0a8c0" opacity="0.17"/><rect x="394" y="592" width="3" height="1" fill="#a0a8c0" opacity="0.30"/><rect x="568" y="581" width="2" height="2" fill="#98a8c8" opacity="0.34"/><rect x="409" y="582" width="2" height="2" fill="#b0b8a8" opacity="0.44"/><rect x="386" y="579" width="3" height="2" fill="#a0a8c0" opacity="0.22"/><rect x="512" y="579" width="3" height="1" fill="#b8c0d4" opacity="0.17"/><rect x="371" y="591" width="2" height="1" fill="#c8b0b8" opacity="0.15"/><rect x="771" y="581" width="2" height="2" fill="#b8c0d4" opacity="0.15"/><rect x="704" y="590" width="2" height="2" fill="#8c8ca0" opacity="0.31"/><rect x="576" y="586" width="2" height="2" fill="#98a8c8" opacity="0.34"/><rect x="707" y="579" width="2" height="2" fill="#b0b8a8" opacity="0.24"/><rect x="600" y="595" width="3" height="2" fill="#b0b8a8" opacity="0.19"/><rect x="731" y="588" width="1" height="1" fill="#a0a8c0" opacity="0.35"/><rect x="545" y="580" width="2" height="2" fill="#98a8c8" opacity="0.43"/><rect x="506" y="582" width="3" height="2" fill="#b8c0d4" opacity="0.18"/><rect x="426" y="594" width="1" height="1" fill="#b8c0d4" opacity="0.34"/><rect x="429" y="590" width="3" height="1" fill="#98a8c8" opacity="0.29"/><rect x="587" y="591" width="1" height="2" fill="#b0b8a8" opacity="0.17"/><rect x="542" y="594" width="1" height="2" fill="#b0b8a8" opacity="0.30"/><rect x="551" y="590" width="2" height="1" fill="#98a8c8" opacity="0.29"/><rect x="387" y="585" width="1" height="2" fill="#a0a8c0" opacity="0.16"/><rect x="365" y="591" width="2" height="2" fill="#b8c0d4" opacity="0.19"/><rect x="406" y="594" width="1" height="2" fill="#a0a8c0" opacity="0.32"/><rect x="754" y="594" width="2" height="2" fill="#b0b8a8" opacity="0.40"/><rect x="704" y="591" width="1" height="2" fill="#8c8ca0" opacity="0.22"/><rect x="574" y="587" width="2" height="2" fill="#c8b0b8" opacity="0.16"/><rect x="615" y="580" width="2" height="2" fill="#8c8ca0" opacity="0.16"/><rect x="751" y="582" width="2" height="1" fill="#b0b8a8" opacity="0.28"/><rect x="719" y="588" width="1" height="1" fill="#c8b0b8" opacity="0.18"/><rect x="702" y="581" width="2" height="2" fill="#b0b8a8" opacity="0.26"/><rect x="410" y="594" width="2" height="2" fill="#8c8ca0" opacity="0.16"/><rect x="789" y="587" width="3" height="1" fill="#8c8ca0" opacity="0.17"/><rect x="622" y="590" width="3" height="2" fill="#a0a8c0" opacity="0.36"/><rect x="546" y="582" width="1" height="2" fill="#b8c0d4" opacity="0.31"/><rect x="485" y="580" width="1" height="1" fill="#a0a8c0" opacity="0.40"/><rect x="670" y="584" width="3" height="2" fill="#b8c0d4" opacity="0.24"/><rect x="495" y="587" width="2" height="1" fill="#a0a8c0" opacity="0.29"/><rect x="785" y="579" width="2" height="2" fill="#b0b8a8" opacity="0.19"/><rect x="517" y="579" width="2" height="2" fill="#98a8c8" opacity="0.32"/><rect x="606" y="581" width="1" height="2" fill="#8c8ca0" opacity="0.41"/><rect x="691" y="589" width="1" height="2" fill="#b8c0d4" opacity="0.39"/><rect x="452" y="592" width="2" height="2" fill="#8c8ca0" opacity="0.24"/><rect x="686" y="591" width="2" height="2" fill="#98a8c8" opacity="0.36"/><rect x="495" y="591" width="2" height="2" fill="#98a8c8" opacity="0.26"/><rect x="454" y="582" width="2" height="1" fill="#a0a8c0" opacity="0.21"/><rect x="742" y="590" width="3" height="2" fill="#c8b0b8" opacity="0.32"/><rect x="481" y="581" width="1" height="1" fill="#b8c0d4" opacity="0.37"/><rect x="458" y="588" width="2" height="1" fill="#a0a8c0" opacity="0.33"/><rect x="382" y="581" width="2" height="2" fill="#b8c0d4" opacity="0.44"/><rect x="653" y="591" width="1" height="2" fill="#b8c0d4" opacity="0.42"/><rect x="469" y="583" width="1" height="1" fill="#b0b8a8" opacity="0.23"/><rect x="659" y="582" width="3" height="2" fill="#a0a8c0" opacity="0.42"/><rect x="472" y="587" width="1" height="1" fill="#a0a8c0" opacity="0.37"/><rect x="775" y="589" width="1" height="1" fill="#98a8c8" opacity="0.25"/><rect x="407" y="581" width="1" height="2" fill="#b8c0d4" opacity="0.43"/><rect x="440" y="584" width="1" height="2" fill="#c8b0b8" opacity="0.27"/><rect x="648" y="584" width="1" height="2" fill="#8c8ca0" opacity="0.18"/><rect x="619" y="592" width="3" height="2" fill="#c8b0b8" opacity="0.41"/><rect x="357" y="584" width="2" height="1" fill="#c8b0b8" opacity="0.33"/><rect x="668" y="584" width="1" height="1" fill="#a0a8c0" opacity="0.21"/><rect x="582" y="593" width="2" height="2" fill="#c8b0b8" opacity="0.25"/><rect x="649" y="594" width="2" height="2" fill="#98a8c8" opacity="0.32"/><rect x="448" y="589" width="3" height="1" fill="#b0b8a8" opacity="0.24"/><rect x="690" y="596" width="3" height="2" fill="#b8c0d4" opacity="0.26"/><rect x="582" y="583" width="2" height="1" fill="#98a8c8" opacity="0.29"/><rect x="638" y="592" width="2" height="1" fill="#b0b8a8" opacity="0.22"/><rect x="683" y="580" width="1" height="2" fill="#a0a8c0" opacity="0.19"/><rect x="588" y="582" width="2" height="2" fill="#98a8c8" opacity="0.26"/><rect x="412" y="581" width="2" height="2" fill="#8c8ca0" opacity="0.26"/><rect x="662" y="586" width="3" height="1" fill="#b0b8a8" opacity="0.42"/><rect x="747" y="585" width="2" height="2" fill="#8c8ca0" opacity="0.18"/><rect x="672" y="579" width="3" height="2" fill="#b8c0d4" opacity="0.17"/><rect x="597" y="585" width="3" height="2" fill="#b0b8a8" opacity="0.41"/><rect x="360" y="578" width="3" height="1" fill="#a0a8c0" opacity="0.26"/><rect x="491" y="586" width="2" height="2" fill="#c8b0b8" opacity="0.21"/><rect x="599" y="581" width="2" height="1" fill="#b8c0d4" opacity="0.23"/><rect x="494" y="587" width="2" height="1" fill="#b8c0d4" opacity="0.35"/><rect x="612" y="586" width="1" height="1" fill="#b0b8a8" opacity="0.26"/><rect x="693" y="594" width="2" height="2" fill="#a0a8c0" opacity="0.45"/><rect x="478" y="578" width="1" height="1" fill="#8c8ca0" opacity="0.19"/><rect x="481" y="587" width="2" height="1" fill="#a0a8c0" opacity="0.29"/><rect x="523" y="585" width="3" height="2" fill="#8c8ca0" opacity="0.33"/><rect x="436" y="589" width="1" height="1" fill="#a0a8c0" opacity="0.30"/><rect x="449" y="586" width="1" height="2" fill="#8c8ca0" opacity="0.16"/><rect x="744" y="579" width="1" height="1" fill="#c8b0b8" opacity="0.44"/><rect x="580" y="578" width="2" height="2" fill="#98a8c8" opacity="0.19"/><rect x="675" y="587" width="1" height="2" fill="#b8c0d4" opacity="0.40"/><rect x="772" y="579" width="2" height="1" fill="#b0b8a8" opacity="0.17"/><rect x="659" y="578" width="2" height="1" fill="#8c8ca0" opacity="0.21"/><rect x="367" y="592" width="2" height="2" fill="#8c8ca0" opacity="0.25"/><rect x="364" y="586" width="2" height="2" fill="#b8c0d4" opacity="0.36"/><rect x="783" y="594" width="2" height="2" fill="#c8b0b8" opacity="0.25"/><rect x="533" y="596" width="3" height="2" fill="#c8b0b8" opacity="0.39"/><rect x="746" y="589" width="2" height="2" fill="#98a8c8" opacity="0.43"/><rect x="459" y="589" width="3" height="1" fill="#a0a8c0" opacity="0.35"/><rect x="385" y="589" width="1" height="2" fill="#8c8ca0" opacity="0.27"/><rect x="595" y="590" width="3" height="2" fill="#b0b8a8" opacity="0.24"/><rect x="778" y="578" width="3" height="2" fill="#b8c0d4" opacity="0.33"/><rect x="789" y="582" width="3" height="2" fill="#b0b8a8" opacity="0.17"/><rect x="780" y="583" width="2" height="1" fill="#b0b8a8" opacity="0.39"/><rect x="642" y="595" width="2" height="2" fill="#c8b0b8" opacity="0.41"/><rect x="501" y="589" width="2" height="1" fill="#8c8ca0" opacity="0.43"/><rect x="581" y="587" width="2" height="2" fill="#a0a8c0" opacity="0.35"/><rect x="414" y="590" width="2" height="2" fill="#b0b8a8" opacity="0.41"/><rect x="365" y="585" width="3" height="1" fill="#c8b0b8" opacity="0.20"/><rect x="458" y="580" width="2" height="2" fill="#98a8c8" opacity="0.31"/><rect x="547" y="580" width="3" height="2" fill="#c8b0b8" opacity="0.36"/><rect x="546" y="587" width="2" height="2" fill="#a0a8c0" opacity="0.15"/><rect x="404" y="587" width="2" height="2" fill="#b8c0d4" opacity="0.31"/><rect x="703" y="583" width="2" height="1" fill="#98a8c8" opacity="0.23"/><rect x="609" y="584" width="2" height="2" fill="#b8c0d4" opacity="0.22"/><rect x="717" y="580" width="3" height="1" fill="#a0a8c0" opacity="0.19"/><rect x="772" y="583" width="2" height="1" fill="#b0b8a8" opacity="0.28"/><rect x="509" y="591" width="2" height="2" fill="#c8b0b8" opacity="0.34"/><rect x="707" y="584" width="3" height="2" fill="#a0a8c0" opacity="0.43"/><rect x="431" y="595" width="2" height="1" fill="#b0b8a8" opacity="0.21"/><rect x="729" y="579" width="3" height="2" fill="#c8b0b8" opacity="0.31"/><rect x="567" y="594" width="1" height="1" fill="#98a8c8" opacity="0.32"/><rect x="762" y="591" width="3" height="2" fill="#c8b0b8" opacity="0.20"/><rect x="375" y="585" width="2" height="2" fill="#8c8ca0" opacity="0.35"/><rect x="675" y="585" width="1" height="2" fill="#b8c0d4" opacity="0.32"/><rect x="688" y="592" width="1" height="1" fill="#a0a8c0" opacity="0.40"/><rect x="600" y="578" width="3" height="1" fill="#a0a8c0" opacity="0.32"/><rect x="370" y="590" width="2" height="2" fill="#8c8ca0" opacity="0.32"/><rect x="679" y="593" width="2" height="2" fill="#8c8ca0" opacity="0.41"/><rect x="411" y="584" width="1" height="1" fill="#98a8c8" opacity="0.23"/><rect x="463" y="584" width="2" height="2" fill="#b8c0d4" opacity="0.32"/><rect x="573" y="586" width="1" height="2" fill="#b8c0d4" opacity="0.22"/><rect x="515" y="586" width="2" height="2" fill="#a0a8c0" opacity="0.19"/><rect x="438" y="590" width="3" height="2" fill="#c8b0b8" opacity="0.36"/><rect x="409" y="595" width="2" height="1" fill="#c8b0b8" opacity="0.43"/><rect x="593" y="579" width="2" height="1" fill="#98a8c8" opacity="0.17"/><rect x="769" y="593" width="1" height="2" fill="#a0a8c0" opacity="0.39"/><rect x="476" y="591" width="3" height="2" fill="#b0b8a8" opacity="0.28"/><rect x="737" y="579" width="3" height="2" fill="#8c8ca0" opacity="0.16"/><rect x="730" y="579" width="3" height="1" fill="#8c8ca0" opacity="0.43"/><rect x="596" y="592" width="3" height="1" fill="#b0b8a8" opacity="0.37"/><rect x="679" y="592" width="2" height="1" fill="#b0b8a8" opacity="0.21"/><rect x="391" y="580" width="1" height="1" fill="#c8b0b8" opacity="0.22"/><rect x="717" y="591" width="3" height="2" fill="#c8b0b8" opacity="0.20"/><rect x="371" y="591" width="1" height="1" fill="#c8b0b8" opacity="0.24"/><rect x="450" y="588" width="2" height="2" fill="#98a8c8" opacity="0.37"/><rect x="484" y="583" width="2" height="1" fill="#b0b8a8" opacity="0.44"/><rect x="520" y="579" width="3" height="1" fill="#b0b8a8" opacity="0.24"/><rect x="637" y="590" width="2" height="2" fill="#a0a8c0" opacity="0.37"/><rect x="537" y="590" width="1" height="1" fill="#b8c0d4" opacity="0.19"/><rect x="757" y="596" width="1" height="2" fill="#c8b0b8" opacity="0.25"/><rect x="680" y="587" width="1" height="1" fill="#c8b0b8" opacity="0.23"/><rect x="481" y="589" width="1" height="1" fill="#a0a8c0" opacity="0.29"/><rect x="688" y="592" width="2" height="2" fill="#b8c0d4" opacity="0.16"/><rect x="612" y="595" width="2" height="1" fill="#a0a8c0" opacity="0.35"/><rect x="368" y="584" width="3" height="2" fill="#a0a8c0" opacity="0.25"/><rect x="508" y="580" width="2" height="1" fill="#b0b8a8" opacity="0.32"/><rect x="389" y="588" width="2" height="2" fill="#c8b0b8" opacity="0.29"/><rect x="361" y="587" width="1" height="2" fill="#b0b8a8" opacity="0.36"/><rect x="531" y="593" width="1" height="2" fill="#b0b8a8" opacity="0.35"/><rect x="419" y="581" width="1" height="2" fill="#8c8ca0" opacity="0.40"/><rect x="735" y="587" width="2" height="2" fill="#8c8ca0" opacity="0.18"/><rect x="452" y="581" width="2" height="2" fill="#98a8c8" opacity="0.19"/><rect x="554" y="581" width="1" height="2" fill="#b8c0d4" opacity="0.26"/><rect x="434" y="585" width="2" height="1" fill="#a0a8c0" opacity="0.37"/><rect x="330" y="643" width="1" height="1" fill="#606870" opacity="0.43"/><rect x="325" y="652" width="2" height="2" fill="#a09070" opacity="0.22"/><rect x="358" y="642" width="2" height="1" fill="#7080a8" opacity="0.27"/><rect x="328" y="644" width="1" height="1" fill="#a09070" opacity="0.32"/><rect x="292" y="649" width="1" height="1" fill="#606870" opacity="0.33"/><rect x="388" y="640" width="2" height="2" fill="#c8c0a0" opacity="0.18"/><rect x="359" y="649" width="2" height="1" fill="#c8c0a0" opacity="0.43"/><rect x="315" y="646" width="1" height="1" fill="#98b0d0" opacity="0.37"/><rect x="349" y="642" width="2" height="1" fill="#98b0d0" opacity="0.21"/><rect x="290" y="645" width="1" height="1" fill="#d0b8b0" opacity="0.41"/><rect x="267" y="648" width="2" height="1" fill="#d0b8b0" opacity="0.33"/><rect x="270" y="654" width="1" height="2" fill="#d0b8b0" opacity="0.27"/><rect x="345" y="656" width="2" height="2" fill="#a09070" opacity="0.38"/><rect x="326" y="643" width="2" height="1" fill="#a09070" opacity="0.29"/><rect x="363" y="651" width="2" height="2" fill="#7080a8" opacity="0.40"/><rect x="362" y="654" width="2" height="2" fill="#889070" opacity="0.31"/><rect x="383" y="641" width="2" height="1" fill="#98b0d0" opacity="0.21"/><rect x="321" y="643" width="3" height="2" fill="#a09070" opacity="0.42"/><rect x="268" y="650" width="3" height="2" fill="#a09070" opacity="0.38"/><rect x="306" y="645" width="1" height="1" fill="#a09070" opacity="0.35"/><rect x="363" y="650" width="3" height="2" fill="#606870" opacity="0.24"/><rect x="339" y="655" width="3" height="2" fill="#7080a8" opacity="0.33"/><rect x="321" y="645" width="2" height="1" fill="#c8c0a0" opacity="0.27"/><rect x="322" y="640" width="2" height="1" fill="#c8c0a0" opacity="0.21"/><rect x="376" y="646" width="2" height="1" fill="#98b0d0" opacity="0.35"/><rect x="267" y="653" width="2" height="2" fill="#c8c0a0" opacity="0.25"/><rect x="281" y="642" width="2" height="2" fill="#7080a8" opacity="0.24"/><rect x="303" y="654" width="2" height="1" fill="#7080a8" opacity="0.31"/><rect x="262" y="642" width="2" height="2" fill="#889070" opacity="0.39"/><rect x="294" y="645" width="1" height="2" fill="#a09070" opacity="0.41"/><rect x="328" y="645" width="2" height="2" fill="#7080a8" opacity="0.17"/><rect x="342" y="647" width="2" height="2" fill="#c8c0a0" opacity="0.35"/><rect x="343" y="645" width="1" height="2" fill="#7080a8" opacity="0.30"/><rect x="351" y="639" width="1" height="2" fill="#7080a8" opacity="0.28"/><rect x="358" y="654" width="3" height="1" fill="#c8c0a0" opacity="0.29"/><rect x="263" y="655" width="2" height="1" fill="#98b0d0" opacity="0.33"/><rect x="336" y="640" width="3" height="1" fill="#a09070" opacity="0.33"/><rect x="388" y="650" width="2" height="2" fill="#d0b8b0" opacity="0.31"/><rect x="316" y="656" width="1" height="2" fill="#a09070" opacity="0.26"/><rect x="385" y="651" width="2" height="2" fill="#98b0d0" opacity="0.40"/><rect x="325" y="640" width="2" height="1" fill="#98b0d0" opacity="0.30"/><rect x="374" y="642" width="2" height="2" fill="#c8c0a0" opacity="0.42"/><rect x="337" y="656" width="2" height="2" fill="#98b0d0" opacity="0.23"/><rect x="376" y="647" width="2" height="2" fill="#7080a8" opacity="0.18"/><rect x="295" y="646" width="3" height="2" fill="#c8c0a0" opacity="0.18"/><rect x="381" y="650" width="3" height="2" fill="#98b0d0" opacity="0.38"/><rect x="302" y="642" width="3" height="2" fill="#889070" opacity="0.40"/><rect x="315" y="640" width="3" height="2" fill="#a09070" opacity="0.43"/><rect x="330" y="644" width="1" height="2" fill="#7080a8" opacity="0.38"/><rect x="267" y="653" width="2" height="2" fill="#889070" opacity="0.43"/><rect x="296" y="643" width="1" height="2" fill="#606870" opacity="0.38"/><rect x="349" y="646" width="1" height="2" fill="#98b0d0" opacity="0.34"/><rect x="386" y="650" width="1" height="2" fill="#7080a8" opacity="0.40"/><rect x="363" y="653" width="3" height="2" fill="#7080a8" opacity="0.39"/><rect x="307" y="642" width="2" height="2" fill="#a09070" opacity="0.31"/><rect x="348" y="654" width="2" height="1" fill="#c8c0a0" opacity="0.35"/><rect x="380" y="640" width="1" height="2" fill="#a09070" opacity="0.22"/><rect x="317" y="643" width="2" height="2" fill="#d0b8b0" opacity="0.41"/><rect x="279" y="643" width="2" height="2" fill="#606870" opacity="0.42"/><rect x="377" y="652" width="3" height="2" fill="#98b0d0" opacity="0.34"/><rect x="374" y="646" width="2" height="2" fill="#606870" opacity="0.38"/><rect x="339" y="648" width="2" height="1" fill="#c8c0a0" opacity="0.18"/><rect x="349" y="656" width="1" height="2" fill="#606870" opacity="0.36"/><rect x="271" y="653" width="2" height="1" fill="#606870" opacity="0.29"/><rect x="360" y="647" width="1" height="2" fill="#889070" opacity="0.32"/><rect x="365" y="640" width="3" height="1" fill="#7080a8" opacity="0.22"/><rect x="343" y="645" width="2" height="2" fill="#889070" opacity="0.22"/><rect x="333" y="653" width="2" height="2" fill="#889070" opacity="0.36"/><rect x="291" y="642" width="2" height="2" fill="#c8c0a0" opacity="0.17"/><rect x="343" y="651" width="1" height="2" fill="#7080a8" opacity="0.30"/><rect x="337" y="643" width="1" height="2" fill="#889070" opacity="0.25"/><rect x="388" y="640" width="3" height="2" fill="#98b0d0" opacity="0.28"/><rect x="386" y="654" width="3" height="1" fill="#c8c0a0" opacity="0.33"/><rect x="276" y="642" width="2" height="1" fill="#a09070" opacity="0.42"/><rect x="264" y="652" width="2" height="2" fill="#98b0d0" opacity="0.32"/><rect x="352" y="656" width="1" height="2" fill="#a09070" opacity="0.33"/><rect x="264" y="645" width="3" height="1" fill="#d0b8b0" opacity="0.41"/><rect x="354" y="650" width="2" height="2" fill="#c8c0a0" opacity="0.34"/><rect x="334" y="644" width="2" height="2" fill="#606870" opacity="0.16"/><rect x="284" y="645" width="1" height="2" fill="#7080a8" opacity="0.38"/><rect x="306" y="654" width="2" height="2" fill="#7080a8" opacity="0.45"/><rect x="379" y="653" width="3" height="1" fill="#d0b8b0" opacity="0.18"/><rect x="334" y="648" width="2" height="2" fill="#c8c0a0" opacity="0.35"/><rect x="382" y="642" width="2" height="2" fill="#7080a8" opacity="0.38"/><rect x="355" y="642" width="3" height="1" fill="#98b0d0" opacity="0.15"/><rect x="289" y="649" width="3" height="1" fill="#606870" opacity="0.39"/><rect x="387" y="640" width="1" height="1" fill="#889070" opacity="0.31"/><rect x="271" y="644" width="3" height="2" fill="#d0b8b0" opacity="0.34"/><rect x="288" y="643" width="2" height="2" fill="#606870" opacity="0.18"/><rect x="374" y="655" width="3" height="2" fill="#889070" opacity="0.33"/><rect x="343" y="651" width="3" height="1" fill="#889070" opacity="0.37"/><rect x="269" y="647" width="3" height="2" fill="#a09070" opacity="0.41"/><rect x="389" y="651" width="3" height="2" fill="#7080a8" opacity="0.33"/><rect x="277" y="647" width="3" height="1" fill="#a09070" opacity="0.22"/><rect x="388" y="643" width="3" height="2" fill="#d0b8b0" opacity="0.37"/><rect x="291" y="652" width="1" height="1" fill="#606870" opacity="0.42"/><rect x="288" y="639" width="3" height="1" fill="#7080a8" opacity="0.22"/><rect x="381" y="643" width="1" height="2" fill="#a09070" opacity="0.32"/><rect x="315" y="640" width="3" height="1" fill="#7080a8" opacity="0.38"/><rect x="275" y="656" width="1" height="1" fill="#98b0d0" opacity="0.39"/><rect x="283" y="648" width="1" height="2" fill="#d0b8b0" opacity="0.44"/><rect x="311" y="654" width="1" height="1" fill="#889070" opacity="0.34"/><rect x="273" y="649" width="1" height="2" fill="#606870" opacity="0.35"/><rect x="341" y="647" width="1" height="2" fill="#a09070" opacity="0.21"/><rect x="286" y="648" width="3" height="1" fill="#606870" opacity="0.36"/><rect x="356" y="650" width="1" height="2" fill="#606870" opacity="0.31"/><rect x="307" y="641" width="2" height="1" fill="#606870" opacity="0.26"/><rect x="301" y="652" width="2" height="2" fill="#889070" opacity="0.32"/><rect x="305" y="642" width="1" height="1" fill="#606870" opacity="0.18"/><rect x="351" y="649" width="3" height="2" fill="#7080a8" opacity="0.43"/><rect x="336" y="643" width="1" height="1" fill="#d0b8b0" opacity="0.17"/><rect x="355" y="650" width="2" height="2" fill="#d0b8b0" opacity="0.41"/><rect x="285" y="655" width="3" height="2" fill="#a09070" opacity="0.19"/><rect x="363" y="653" width="1" height="2" fill="#7080a8" opacity="0.18"/><rect x="319" y="656" width="3" height="2" fill="#d0b8b0" opacity="0.38"/><rect x="358" y="645" width="2" height="1" fill="#7080a8" opacity="0.31"/><rect x="306" y="648" width="2" height="2" fill="#606870" opacity="0.38"/><rect x="361" y="654" width="1" height="2" fill="#98b0d0" opacity="0.18"/><rect x="368" y="644" width="2" height="2" fill="#606870" opacity="0.31"/><rect x="386" y="642" width="1" height="2" fill="#a09070" opacity="0.31"/><rect x="382" y="646" width="1" height="2" fill="#98b0d0" opacity="0.22"/><rect x="359" y="654" width="2" height="2" fill="#a09070" opacity="0.19"/><rect x="383" y="649" width="2" height="2" fill="#a09070" opacity="0.24"/><rect x="312" y="645" width="1" height="1" fill="#a09070" opacity="0.41"/><rect x="344" y="650" width="2" height="2" fill="#606870" opacity="0.33"/><rect x="351" y="644" width="1" height="2" fill="#606870" opacity="0.31"/><rect x="271" y="640" width="1" height="2" fill="#7080a8" opacity="0.34"/><rect x="327" y="654" width="3" height="1" fill="#606870" opacity="0.23"/><rect x="313" y="651" width="2" height="2" fill="#a09070" opacity="0.41"/><rect x="372" y="647" width="2" height="1" fill="#606870" opacity="0.27"/><rect x="362" y="641" width="2" height="2" fill="#a09070" opacity="0.25"/><rect x="342" y="653" width="1" height="1" fill="#98b0d0" opacity="0.38"/><rect x="347" y="644" width="2" height="1" fill="#606870" opacity="0.19"/><rect x="274" y="656" width="3" height="2" fill="#a09070" opacity="0.18"/><rect x="337" y="640" width="2" height="1" fill="#c8c0a0" opacity="0.41"/><rect x="279" y="655" width="2" height="2" fill="#a09070" opacity="0.20"/><rect x="309" y="652" width="2" height="2" fill="#98b0d0" opacity="0.31"/><rect x="276" y="643" width="2" height="2" fill="#d0b8b0" opacity="0.26"/><rect x="360" y="643" width="2" height="1" fill="#d0b8b0" opacity="0.27"/><rect x="309" y="650" width="3" height="2" fill="#d0b8b0" opacity="0.15"/><rect x="275" y="645" width="2" height="1" fill="#c8c0a0" opacity="0.16"/><rect x="318" y="641" width="3" height="2" fill="#a09070" opacity="0.30"/><rect x="314" y="647" width="2" height="1" fill="#7080a8" opacity="0.28"/><rect x="277" y="640" width="2" height="2" fill="#7080a8" opacity="0.22"/><rect x="305" y="640" width="2" height="2" fill="#a09070" opacity="0.21"/><rect x="340" y="656" width="3" height="1" fill="#606870" opacity="0.43"/><rect x="329" y="643" width="2" height="2" fill="#d0b8b0" opacity="0.24"/><rect x="275" y="647" width="3" height="2" fill="#d0b8b0" opacity="0.37"/><rect x="272" y="647" width="2" height="1" fill="#98b0d0" opacity="0.23"/><rect x="363" y="640" width="3" height="2" fill="#c8c0a0" opacity="0.20"/><rect x="263" y="650" width="1" height="2" fill="#7080a8" opacity="0.36"/><rect x="266" y="650" width="3" height="2" fill="#889070" opacity="0.19"/><rect x="309" y="646" width="2" height="2" fill="#606870" opacity="0.41"/><rect x="309" y="654" width="2" height="2" fill="#98b0d0" opacity="0.15"/><rect x="321" y="651" width="3" height="1" fill="#d0b8b0" opacity="0.16"/><rect x="318" y="641" width="2" height="2" fill="#a09070" opacity="0.24"/><rect x="288" y="640" width="1" height="2" fill="#98b0d0" opacity="0.15"/><rect x="383" y="643" width="3" height="2" fill="#889070" opacity="0.41"/></g>
</svg>
<div class="box" style="left:193px;top:666px;width:802px;height:159px;border-color:#e4e4e4"></div>
<div class="vl" style="left:594px;top:667px;height:157px;background:#ececec"></div>
<div class="vl" style="left:737px;top:721px;height:78px;background:#eeeeee"></div>
<svg class="a" style="left:280px;top:682px" width="13" height="13" viewBox="0 0 13 13"><circle cx="6.5" cy="6.5" r="5.6" fill="none" stroke="#b5b5b5" stroke-width="1"/><text x="6.5" y="9.6" font-size="8.5" text-anchor="middle" fill="#b0b0b0" font-family="Liberation Sans">?</text></svg>
<svg class="a" style="left:248px;top:712px" width="92" height="92" viewBox="0 0 92 92">
<circle cx="46" cy="46" r="41.9" fill="none" stroke="#e2e5ea" stroke-width="4.2"/>
<circle cx="46" cy="46" r="41.9" fill="none" stroke="#3f8fe8" stroke-width="4.4" stroke-dasharray="158 400" transform="rotate(-90 46 46)"/>
</svg>
<!-- tab -->
<div class="a" style="left:189px;top:930px;width:805px;height:1px;background:#e6e6e6"></div>
<div class="a" style="left:209px;top:906px;width:68px;height:23px;background:#fff;border:1px solid #e3e3e3;border-top:2px solid #e4393c;border-bottom:none;"></div>
<!-- table -->
<div class="a" style="left:193px;top:988px;width:798px;height:66px;border:1px solid #dfe2e6;background:#fff"></div>
<div class="a" style="left:194px;top:989px;width:798px;height:32px;background:#f5f6f9"></div>
<div class="a" style="left:194px;top:1021px;width:798px;height:1px;background:#dfe2e6"></div>
<div class="a" style="left:353px;top:989px;width:1px;height:66px;background:#dfe2e6"></div>
<div class="a" style="left:537px;top:989px;width:1px;height:66px;background:#dfe2e6"></div>
<div class="a" style="left:921px;top:989px;width:1px;height:66px;background:#dfe2e6"></div>
<div class="a" style="left:925px;top:1027px;width:49px;height:19px;border:2px solid #d9262c;"></div>
<div class="t" id="title" style="left:28.5px;top:29.5px;font-size:24px;line-height:24px;color:#2b2b2b;font-weight:700;">店铺质量指数概况</div>
<div class="t" id="sub" style="left:26.7px;top:71.2px;font-size:16px;line-height:16px;color:#666;font-weight:400;letter-spacing:0.21px;">所在行业：测试分类二级</div>
<div class="t" id="faq" style="left:1312.7px;top:71.5px;font-size:16px;line-height:16px;color:#4f77cf;font-weight:400;">常见问题</div>
<div class="t" id="c1h" style="left:176.7px;top:139.9px;font-size:16px;line-height:16px;color:#333;font-weight:400;">店铺质量等级</div>
<div class="t" id="c1lvl" style="left:231.2px;top:207.0px;font-size:18px;line-height:18px;color:#333;font-weight:400;">级</div>
<div class="t" id="c1link" style="left:160.7px;top:261.7px;font-size:16px;line-height:16px;color:#4f77cf;font-weight:400;">店铺质量等级规则</div>
<div class="t" id="c2h" style="left:530.0px;top:139.9px;font-size:16px;line-height:16px;color:#333;font-weight:400;">店铺质量得分</div>
<div class="t" id="c2fen" style="left:580.9px;top:206.9px;font-size:18px;line-height:18px;color:#333;font-weight:400;">分</div>
<div class="t" id="c2link" style="left:513.9px;top:261.6px;font-size:16px;line-height:16px;color:#4f77cf;font-weight:400;">店铺质量指数规则</div>
<div class="t" id="c3h" style="left:1035.4px;top:139.1px;font-size:16px;line-height:16px;color:#333;font-weight:400;">店铺权益</div>
<div class="t" id="r1" style="left:877.6px;top:187.3px;font-size:16px;line-height:16px;color:#555;font-weight:400;">已影响风向标排名</div>
<div class="t" id="r2" style="left:876.6px;top:214.3px;font-size:16px;line-height:16px;color:#555;font-weight:400;">已影响京信用分值</div>
<div class="t" id="r3" style="left:1147.4px;top:187.8px;font-size:16px;line-height:16px;color:#555;font-weight:400;">已通过品牌闪购资格</div>
<div class="t" id="r4" style="left:1147.4px;top:214.8px;font-size:16px;line-height:16px;color:#555;font-weight:400;">已通过好店基础门槛</div>
<div class="t" id="c3link" style="left:1035.8px;top:263.8px;font-size:16px;line-height:16px;color:#4f77cf;font-weight:400;">权益规则</div>
<div class="t" id="b2h" style="left:55.6px;top:350.3px;font-size:16px;line-height:16px;color:#333;font-weight:400;">店铺质量抱怨率</div>
<div class="t" id="b2s" style="left:55.9px;top:379.8px;font-size:16px;line-height:16px;color:#666;font-weight:400;letter-spacing:0.16px;">(抱怨订单数/订单总数)*100万，越低越好</div>
<div class="t" id="b2a" style="left:55.3px;top:444.6px;font-size:16px;line-height:16px;color:#666;font-weight:400;">店铺:</div>
<div class="t" id="b2b" style="left:176.7px;top:444.6px;font-size:16px;line-height:16px;color:#666;font-weight:400;">行业均值:</div>
<div class="t" id="b2h2" style="left:429.4px;top:350.8px;font-size:16px;line-height:16px;color:#333;font-weight:400;">店铺主要问题分类</div>
<div class="t" id="empty" style="left:777.2px;top:484.1px;font-size:16px;line-height:16px;color:#999;font-weight:400;">订单量大于50单后开始计算</div>
<div class="t" id="p1" style="left:193.9px;top:558.2px;font-size:14px;line-height:14px;color:#333;font-weight:700;">商品质量分析</div>
<div class="t" id="sku" style="left:193.3px;top:584.1px;font-size:10px;line-height:10px;color:#333;font-weight:700;transform:scaleX(0.73);transform-origin:0 0;">SKU ID:</div>
<div class="t" id="pname" style="left:296.4px;top:582.0px;font-size:11px;line-height:11px;color:#555;font-weight:400;">商品名称 ：</div>
<div class="t" id="p2" style="left:193.6px;top:618.6px;font-size:14px;line-height:14px;color:#333;font-weight:700;letter-spacing:0.29px;">商品质量指数概况</div>
<div class="t" id="ind" style="left:193.0px;top:642.4px;font-size:11px;line-height:11px;color:#666;font-weight:400;letter-spacing:-1.00px;">所在行业：</div>
<div class="t" id="k1" style="left:210.0px;top:685.8px;font-size:11px;line-height:11px;color:#333;font-weight:700;">商品质量指数</div>
<div class="t" id="ringB" style="left:285.6px;top:739.3px;font-size:23px;line-height:23px;color:#454a55;font-weight:700;">B</div>
<div class="t" id="ringT" style="left:265.4px;top:768.9px;font-size:10px;line-height:10px;color:#555;font-weight:400;letter-spacing:-0.50px;">商品当前质量</div>
<div class="t" id="d1" style="left:361.1px;top:746.3px;font-size:10px;line-height:10px;color:#333;font-weight:400;letter-spacing:-0.41px;">此款商品质量表现位于行业中等水</div>
<div class="t" id="d2" style="left:361.7px;top:762.2px;font-size:10px;line-height:10px;color:#333;font-weight:400;">平，请予以关注！</div>
<div class="t" id="k2" style="left:617.4px;top:685.2px;font-size:11px;line-height:11px;color:#333;font-weight:700;">商品当前权益</div>
<div class="t" id="more" style="left:930.5px;top:685.8px;font-size:11px;line-height:11px;color:#2a7ad6;font-weight:400;letter-spacing:-1.30px;">更多权益 ></div>
<div class="t" id="m1" style="left:629.3px;top:724.7px;font-size:10px;line-height:10px;color:#333;font-weight:400;letter-spacing:-0.41px;">营销活动质量基础门槛</div>
<div class="t" id="m2" style="left:749.4px;top:724.2px;font-size:10px;line-height:10px;color:#333;font-weight:400;letter-spacing:-0.41px;">秒杀活动质量基础门槛</div>
<div class="t" id="pass1" style="left:644.6px;top:747.5px;font-size:21px;line-height:21px;color:#444;font-weight:300;">已通过</div>
<div class="t" id="pass2" style="left:764.2px;top:747.5px;font-size:21px;line-height:21px;color:#444;font-weight:300;">已通过</div>
<div class="t" id="l1" style="left:638.9px;top:780.7px;font-size:10px;line-height:10px;color:#2a7ad6;font-weight:400;letter-spacing:-0.44px;">查看营销活动规则</div>
<div class="t" id="l2" style="left:758.1px;top:780.7px;font-size:10px;line-height:10px;color:#2a7ad6;font-weight:400;letter-spacing:-0.47px;">查看秒杀活动规则</div>
<div class="t" id="p3" style="left:193.1px;top:849.5px;font-size:14px;line-height:14px;color:#333;font-weight:700;letter-spacing:0.29px;">商品质量指数分析</div>
<div class="t" id="form" style="left:204.3px;top:879.5px;font-size:10px;line-height:10px;color:#333;font-weight:400;letter-spacing:-0.34px;">商品质量指数=消费反馈</div>
<div class="t" id="tab" style="left:221.2px;top:915.4px;font-size:11px;line-height:11px;color:#e4393c;font-weight:400;">消费反馈</div>
<div class="t" id="desc" style="left:193.0px;top:939.7px;font-size:10px;line-height:10px;color:#333;font-weight:400;letter-spacing:-0.41px;">消费者对商品质量问题的反馈，来源于商品客诉、评价、售后退换修、售后咨询、赔付数据</div>
<div class="t" id="top5" style="left:193.5px;top:968.4px;font-size:11px;line-height:11px;color:#333;font-weight:700;letter-spacing:-0.79px;">问题类型Top5</div>
<div class="t" id="th1" style="left:252.9px;top:1000.7px;font-size:10px;line-height:10px;color:#555;font-weight:400;">问题类型</div>
<div class="t" id="th2" style="left:426.6px;top:1000.7px;font-size:10px;line-height:10px;color:#555;font-weight:400;letter-spacing:-0.83px;">出现频次</div>
<div class="t" id="th3" style="left:684.0px;top:1000.2px;font-size:10px;line-height:10px;color:#555;font-weight:400;letter-spacing:-0.22px;">关键词/典型文本示例</div>
<div class="t" id="th4" style="left:946.0px;top:1000.7px;font-size:10px;line-height:10px;color:#555;font-weight:400;">操作</div>
<div class="t" id="td1" style="left:254.0px;top:1033.3px;font-size:10px;line-height:10px;color:#333;font-weight:400;letter-spacing:-0.67px;">商品不满</div>
<div class="t" id="td2" style="left:443.0px;top:1033.8px;font-size:10px;line-height:10px;color:#333;font-weight:400;">1</div>
<div class="t" id="td3" style="left:546.5px;top:1033.3px;font-size:10px;line-height:10px;color:#333;font-weight:400;">时间显示不准。</div>
<div class="t" id="td4" style="left:930.5px;top:1033.9px;font-size:10px;line-height:10px;color:#2a7ad6;font-weight:400;letter-spacing:-0.50px;">反馈详情</div>
</body></html>
